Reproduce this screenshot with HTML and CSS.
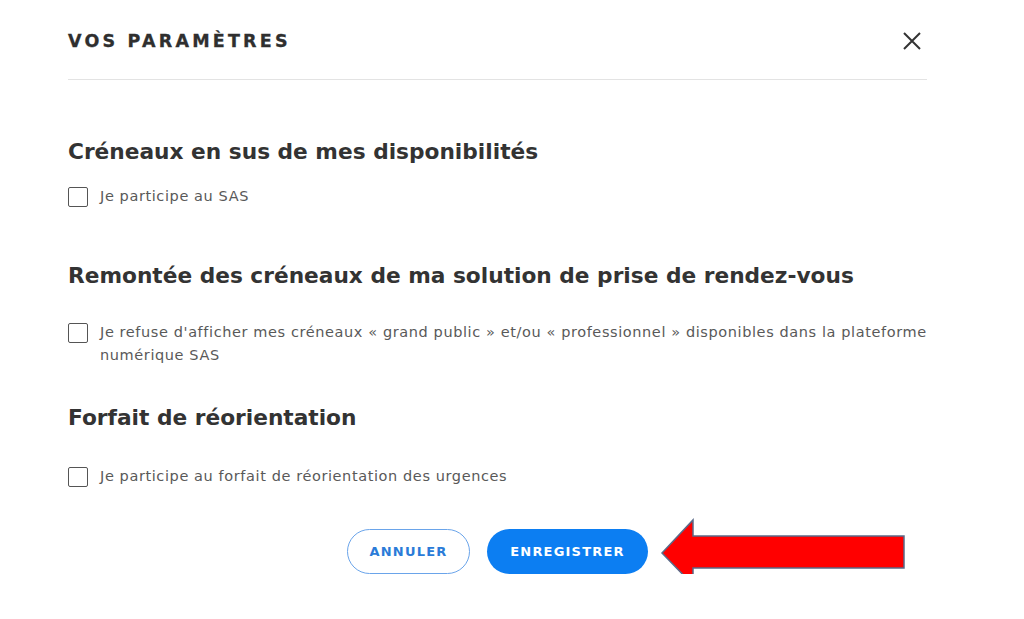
FILE: index.html
```html
<!DOCTYPE html>
<html lang="fr">
<head>
<meta charset="utf-8">
<title>Vos paramètres</title>
<link rel="stylesheet" href="styles.css">
</head>
<body>
<div class="modal">
  <header class="modal-header">
    <h1 class="modal-title">VOS PARAMÈTRES</h1>
    <button class="close" aria-label="Fermer">
      <svg width="20" height="20" viewBox="0 0 20 20"><path d="M2 2L18 18M18 2L2 18" stroke="#333" stroke-width="2" fill="none"/></svg>
    </button>
  </header>

  <section class="sec sec1">
    <h2 class="sec-title">Créneaux en sus de mes disponibilités</h2>
    <label class="check"><span class="box"></span><span class="lbl">Je participe au SAS</span></label>
  </section>

  <section class="sec sec2">
    <h2 class="sec-title">Remontée des créneaux de ma solution de prise de rendez-vous</h2>
    <label class="check"><span class="box"></span><span class="lbl">Je refuse d'afficher mes créneaux « grand public » et/ou « professionnel » disponibles dans la plateforme numérique SAS</span></label>
  </section>

  <section class="sec sec3">
    <h2 class="sec-title">Forfait de réorientation</h2>
    <label class="check"><span class="box"></span><span class="lbl">Je participe au forfait de réorientation des urgences</span></label>
  </section>

  <div class="actions">
    <button class="btn btn-outline">ANNULER</button>
    <button class="btn btn-primary">ENREGISTRER</button>
    <svg class="arrow" width="250" height="70" viewBox="0 0 250 70"><polygon points="2,35 33,2 33,18 244,18 244,50 33,50 33,67" fill="#ff0000" stroke="#5a6a88" stroke-width="1.5"/></svg>
  </div>
</div>
</body>
</html>
```

FILE: styles.css
```css
* { box-sizing: border-box; }
html, body { margin: 0; padding: 0; background: #fff; }
body { font-family: "DejaVu Sans", "Inter", sans-serif; color: #333; }

.modal { width: 859px; margin-left: 68px; }

.modal-header {
  display: flex; align-items: center; justify-content: space-between;
  padding: 26px 0 23px; border-bottom: 1px solid #e3e3e3;
}
.modal-title {
  margin: 0; font-size: 17.5px; line-height: 30px; font-weight: 700;
  letter-spacing: 3.2px; color: #2f2f2f;
  -webkit-text-stroke: 0.3px #2f2f2f;
}
.close {
  border: 0; background: none; padding: 0; margin-right: 5px;
  width: 20px; height: 20px; display: flex;
}

.sec-title {
  margin: 0; font-size: 21.7px; line-height: 30px; font-weight: 700; color: #333;
}
.sec1 { margin-top: 57px; }
.sec1 .check { margin-top: 18px; }
.sec2 { margin-top: 53px; }
.sec2 .check { margin-top: 30px; }
.sec3 { margin-top: 36px; }
.sec3 .check { margin-top: 32px; }

.check { display: flex; align-items: flex-start; gap: 12px; }
.box {
  flex: none; width: 20px; height: 20px; margin-top: 1.5px;
  border: 1.5px solid #555; border-radius: 2px; background: #fff;
}
.lbl { font-size: 14.5px; line-height: 23px; color: #595959; letter-spacing: 0.6px; }

.actions {
  position: relative; display: flex; justify-content: center; gap: 17px;
  margin-top: 41px;
}
.btn {
  height: 45px; border-radius: 23px; font-family: inherit; font-size: 13px;
  font-weight: 700; letter-spacing: 1.2px; cursor: pointer;
}
.btn-outline {
  width: 123px; background: #fff; color: #2a7bd8; border: 1.5px solid #6aa4ea;
}
.btn-primary {
  width: 161px; background: #0c7ef2; color: #fff; border: 0;
}
.arrow { position: absolute; left: 592px; top: -11px; }
```
